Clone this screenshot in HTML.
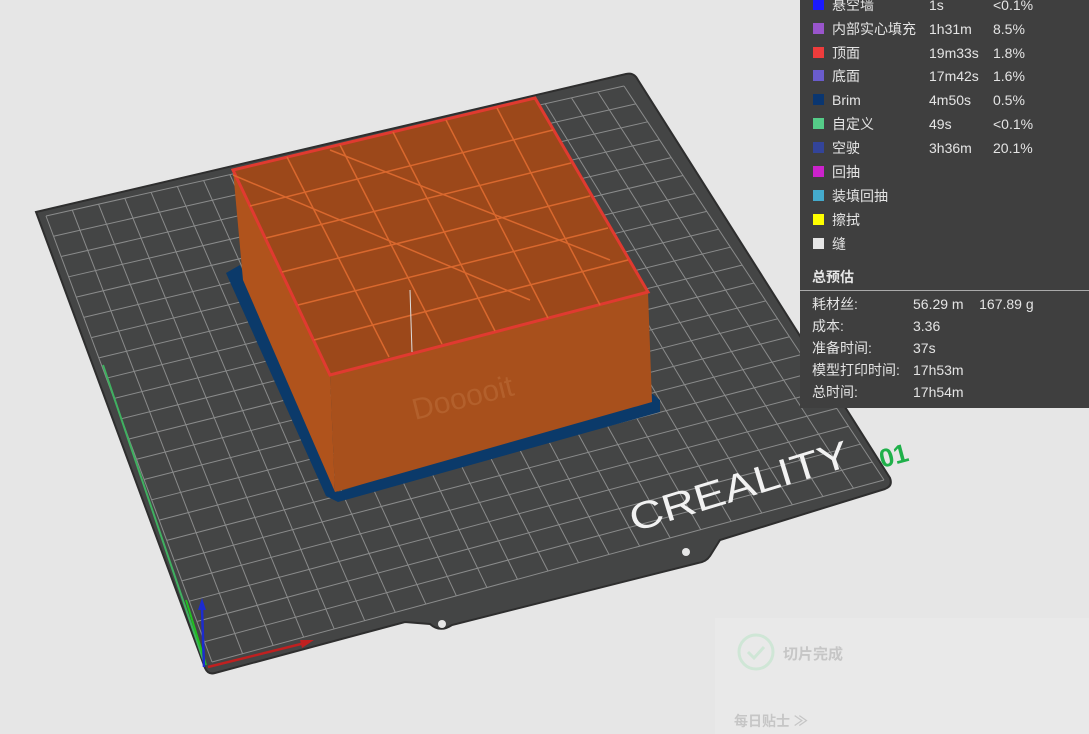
<!DOCTYPE html>
<html><head><meta charset="utf-8"><style>
body{margin:0;width:1089px;height:734px;overflow:hidden;background:#e6e6e6;font-family:"Liberation Sans","Noto Sans CJK SC",sans-serif;position:relative}
#panel{position:absolute;left:800px;top:0;width:289px;height:408px;background:#3f3f3f;color:#e4e4e4;font-size:14px}
.r{position:absolute;left:0;height:20px;line-height:20px;white-space:nowrap}
.sw{position:absolute;left:13px;top:4px;width:11px;height:11px}
.n{position:absolute;left:32px}.t{position:absolute;left:129px}.p{position:absolute;left:193px}
.s{position:absolute;left:12px;line-height:20px;white-space:nowrap}
</style></head><body>
<svg id="sv" width="1089" height="734" style="position:absolute;left:0;top:0">
<path d="M36 212 L626 74 Q634 72 638 80 L890 478 Q893 486 885 489 L720 540 L710 556 Q706 562 698 563 L452 625 Q440 633 430 624 L405 622 L215 673 Q208 675 205 668 Z" fill="#444545" stroke="#2e2e2e" stroke-width="2"/>
<g id="grid" stroke="#8a8b8b" stroke-width="1"></g>
<polygon points="226,273 240,265 338,492 650,392 660,400 660,412 338,502 326,496" fill="#0b3a6a"/>
<polygon points="233,170 243,280 335,492 330,375" fill="#b0531c"/>
<polygon points="330,375 648,292 652,402 335,492" fill="#a8501c"/>
<polygon points="233,170 535,98 648,292 330,375" fill="#9c481a" stroke="#e03a30" stroke-width="3"/>
<g stroke="#d9682e" stroke-width="1.5" fill="none">
<line x1="250" y1="206" x2="553" y2="130"/><line x1="266" y1="238" x2="571" y2="163"/><line x1="282" y1="272" x2="590" y2="196"/><line x1="298" y1="305" x2="608" y2="228"/><line x1="314" y1="340" x2="628" y2="260"/>
<line x1="287" y1="157" x2="389" y2="357"/><line x1="340" y1="145" x2="442" y2="344"/><line x1="393" y1="132" x2="495" y2="331"/><line x1="446" y1="120" x2="548" y2="318"/><line x1="497" y1="108" x2="600" y2="305"/>
<line x1="233" y1="175" x2="530" y2="300"/><line x1="330" y1="150" x2="610" y2="260"/>
</g>
<line x1="410" y1="290" x2="412" y2="352" stroke="#ddd" stroke-width="1"/>
<text x="415" y="420" font-size="30" fill="#b3602c" transform="rotate(-14 415 420)" font-family="Liberation Sans">Dooooit</text>
<text x="634" y="532" font-size="38" fill="#f2f2f2" transform="rotate(-17 634 532)" font-family="Liberation Sans" textLength="228" lengthAdjust="spacingAndGlyphs">CREALITY</text>
<text x="882" y="468" font-size="26" fill="#1fb04a" font-weight="bold" transform="rotate(-15 882 468)">01</text>
<line x1="103" y1="365" x2="205" y2="665" stroke="#3fb060" stroke-width="2"/>
<line x1="186" y1="600" x2="206" y2="665" stroke="#20c020" stroke-width="2"/>
<line x1="208" y1="667" x2="305" y2="643" stroke="#c02020" stroke-width="2.5"/>
<polygon points="300,640 314,640 302,648" fill="#c02020"/>
<line x1="204" y1="667" x2="202" y2="608" stroke="#1c2bd0" stroke-width="2.5"/>
<polygon points="198,610 202,598 206,610" fill="#1c2bd0"/>
<circle cx="686" cy="552" r="4" fill="#e6e6e6"/><circle cx="442" cy="624" r="4" fill="#e6e6e6"/>
</svg>
<div style="position:absolute;left:715px;top:618px;width:374px;height:116px;background:#e9e9e9"></div>
<svg style="position:absolute;left:736px;top:632px" width="40" height="40"><circle cx="20" cy="20" r="17" fill="none" stroke="#cfe6d6" stroke-width="3"/><path d="M12 20 L18 26 L28 15" fill="none" stroke="#cfe6d6" stroke-width="3"/></svg>
<div style="position:absolute;left:783px;top:643px;font-size:15px;color:#c6c6c6;font-weight:bold">切片完成</div>
<div style="position:absolute;left:734px;top:711px;font-size:14px;color:#c6c6c6;font-weight:bold">每日贴士 ≫</div>
<div id="panel">
<div class="r" style="top:-5px"><span class="sw" style="background:#1a1aff"></span><span class="n">悬空墙</span><span class="t">1s</span><span class="p">&lt;0.1%</span></div>
<div class="r" style="top:19px"><span class="sw" style="background:#9955cc"></span><span class="n">内部实心填充</span><span class="t">1h31m</span><span class="p">8.5%</span></div>
<div class="r" style="top:43px"><span class="sw" style="background:#ee3c3c"></span><span class="n">顶面</span><span class="t">19m33s</span><span class="p">1.8%</span></div>
<div class="r" style="top:66px"><span class="sw" style="background:#6a5ccc"></span><span class="n">底面</span><span class="t">17m42s</span><span class="p">1.6%</span></div>
<div class="r" style="top:90px"><span class="sw" style="background:#0a3670"></span><span class="n">Brim</span><span class="t">4m50s</span><span class="p">0.5%</span></div>
<div class="r" style="top:114px"><span class="sw" style="background:#55cc88"></span><span class="n">自定义</span><span class="t">49s</span><span class="p">&lt;0.1%</span></div>
<div class="r" style="top:138px"><span class="sw" style="background:#334499"></span><span class="n">空驶</span><span class="t">3h36m</span><span class="p">20.1%</span></div>
<div class="r" style="top:162px"><span class="sw" style="background:#cc22cc"></span><span class="n">回抽</span></div>
<div class="r" style="top:186px"><span class="sw" style="background:#44aacc"></span><span class="n">装填回抽</span></div>
<div class="r" style="top:210px"><span class="sw" style="background:#ffff00"></span><span class="n">擦拭</span></div>
<div class="r" style="top:234px"><span class="sw" style="background:#e6e6e6"></span><span class="n">缝</span></div>
<div class="s" style="top:267px;font-weight:bold">总预估</div>
<div style="position:absolute;left:0;top:290px;width:289px;height:1px;background:#aaa"></div>
<div class="s" style="top:294px">耗材丝:</div><div class="s" style="top:294px;left:113px">56.29 m&nbsp;&nbsp;&nbsp;&nbsp;167.89 g</div>
<div class="s" style="top:316px">成本:</div><div class="s" style="top:316px;left:113px">3.36</div>
<div class="s" style="top:338px">准备时间:</div><div class="s" style="top:338px;left:113px">37s</div>
<div class="s" style="top:360px">模型打印时间:</div><div class="s" style="top:360px;left:113px">17h53m</div>
<div class="s" style="top:382px">总时间:</div><div class="s" style="top:382px;left:113px">17h54m</div>
</div>
<script>
var g=document.getElementById('grid'),P=[[46,216],[624,86],[884,480],[212,662]],N=22,ns='http://www.w3.org/2000/svg';
function L(a,b,t){return[a[0]+(b[0]-a[0])*t,a[1]+(b[1]-a[1])*t]}
function ln(a,b){var l=document.createElementNS(ns,'line');l.setAttribute('x1',a[0]);l.setAttribute('y1',a[1]);l.setAttribute('x2',b[0]);l.setAttribute('y2',b[1]);g.appendChild(l)}
for(var i=0;i<=N;i++){var t=i/N;ln(L(P[0],P[1],t),L(P[3],P[2],t));ln(L(P[0],P[3],t),L(P[1],P[2],t));}
</script>
</body></html>
